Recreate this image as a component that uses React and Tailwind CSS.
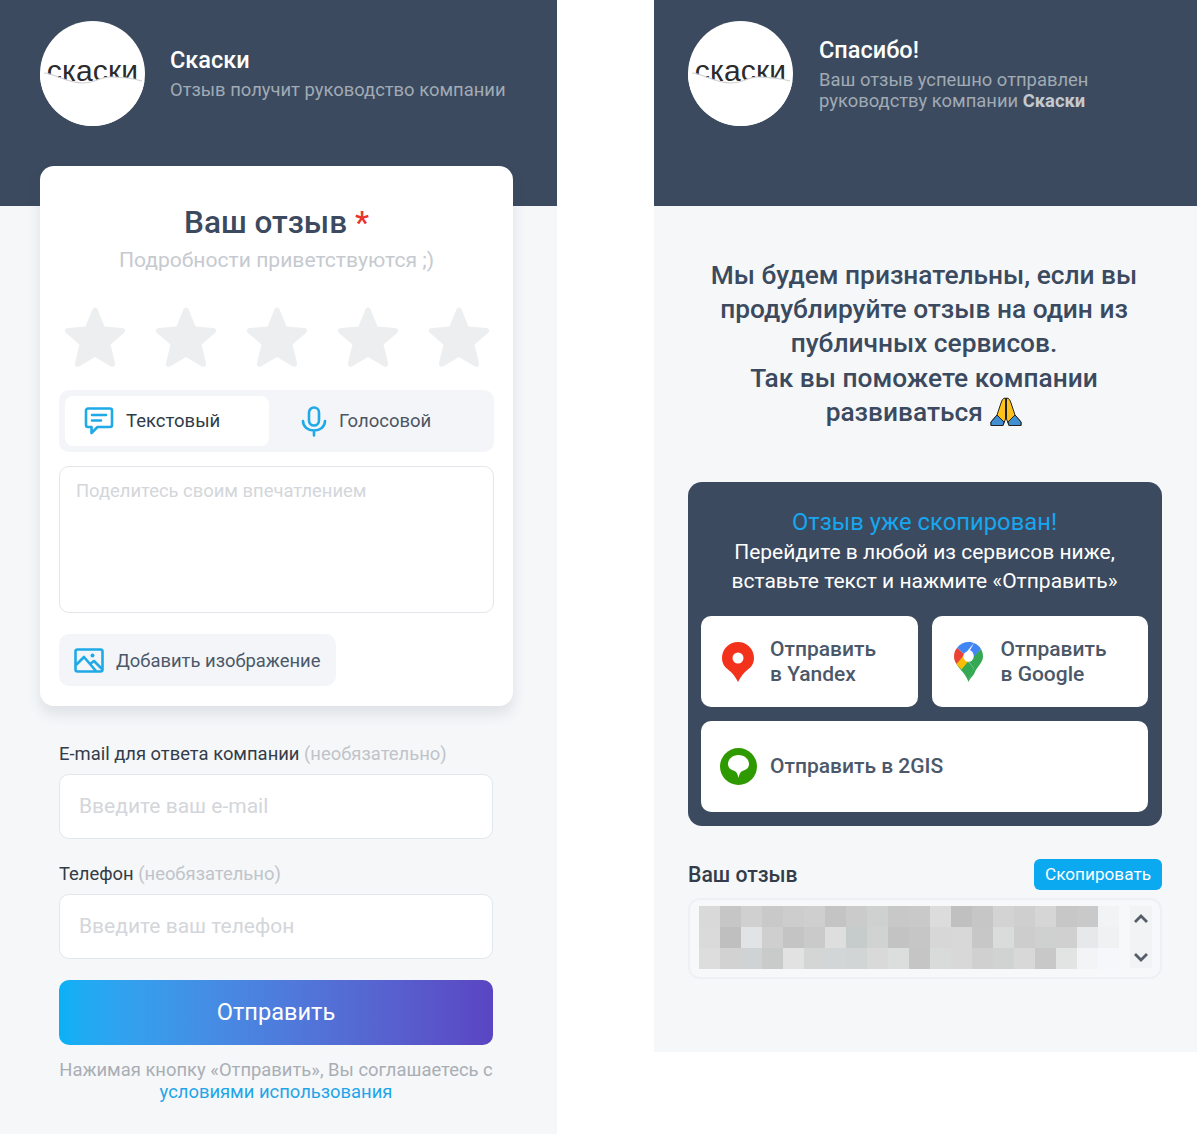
const Logo = () => (
  <div className="relative w-[105px] h-[105px] rounded-full bg-white overflow-hidden shrink-0">
    <div className="absolute left-0 right-0 top-[33px] text-center text-[30px] leading-[34px] text-[#2b2b2b] font-['Liberation_Sans',sans-serif] tracking-[0.2px]">скаски</div>
    <svg className="absolute left-0 top-0" width="105" height="105" viewBox="0 0 105 105">
      <path d="M0 52 C14 52 26 62 43 62 C55 62 60 56 70 56 C82 56 92 57 105 60 L105 105 L0 105 Z" fill="#fff" />
      <path d="M4 52 C14 52 26 62 43 62 C55 62 60 56 70 56 C82 56 92 57 102 60" fill="none" stroke="#cfcfcf" strokeWidth="1.2" />
    </svg>
  </div>
);

const Star = () => (
  <svg width="62" height="62" viewBox="0 0 62 62">
    <path d="M31 1.5 C32.5 1.5 33.5 3 34 4.5 L40.5 20.5 L58 22 C61.5 22.5 62 25 60 27 L46.5 38.5 L51 57 C51.5 60.5 49 61.5 47 60.5 L31 51 L15 60.5 C13 61.5 10.5 60.5 11 57 L15.5 38.5 L2 27 C0 25 .5 22.5 4 22 L21.5 20.5 L28 4.5 C28.5 3 29.5 1.5 31 1.5 Z" fill="#eceef0" />
  </svg>
);

const ChatIcon = () => (
  <svg width="30" height="30" viewBox="0 0 30 30" fill="none" stroke="#1fa9e6" strokeWidth="2.6" strokeLinejoin="round" strokeLinecap="round">
    <path d="M4 2.5 H26 A2 2 0 0 1 28 4.5 V19 A2 2 0 0 1 26 21 H13.5 L7.5 27 V21 H4 A2 2 0 0 1 2 19 V4.5 A2 2 0 0 1 4 2.5 Z" />
    <path d="M8 9 H22 M8 14.5 H17" />
  </svg>
);

const MicIcon = () => (
  <svg width="26" height="31" viewBox="0 0 26 31" fill="none" stroke="#1fa9e6" strokeWidth="2.6" strokeLinecap="round">
    <rect x="8" y="1.5" width="10" height="18" rx="5" />
    <path d="M2 15 C2 21 7 24.5 13 24.5 C19 24.5 24 21 24 15 M13 24.5 V29.5" />
  </svg>
);

const ImageIcon = () => (
  <svg width="30" height="25" viewBox="0 0 30 25" fill="none" stroke="#1fa9e6" strokeWidth="2.6" strokeLinejoin="round">
    <rect x="1.5" y="1.5" width="27" height="22" rx="2" />
    <path d="M2 17 L10 9 L22 23 M16 16 L20 13 L28 21" />
    <circle cx="18.5" cy="7.5" r="2" fill="#1fa9e6" stroke="none" />
  </svg>
);

const YandexPin = () => (
  <svg width="32" height="40" viewBox="0 0 32 40">
    <path d="M16 0 C7 0 0 7 0 16 C0 23 4 26 9 30 C12 33 14 36 16 40 C18 36 20 33 23 30 C28 26 32 23 32 16 C32 7 25 0 16 0 Z" fill="#f2321a" />
    <circle cx="16" cy="16" r="5.5" fill="#fff" />
  </svg>
);

const GooglePin = () => (
  <svg width="29" height="40" viewBox="0 0 29 40">
    <path d="M14.5 40 C12 32 6 28 2.5 22 L9 14 L20 26 C18 30 16 34 14.5 40 Z" fill="#34a853" />
    <path d="M20 26 L14 19 L27 7 C28.5 9.5 29 12 29 14.5 C29 21 23 24 20 32 C18 35 16 36 14.5 40 C16 33 18 29 20 26 Z" fill="#34a853" />
    <path d="M2.5 22 L10 13 L14.5 19 L7.5 27.5 C5.5 25.5 4 24 2.5 22 Z" fill="#fbbc04" />
    <path d="M0 14.5 C0 10.5 1.3 7.8 3.2 5.8 L10.5 12.5 L2.5 22 C0.8 19.5 0 17 0 14.5 Z" fill="#ea4335" />
    <path d="M3.2 5.8 C6 2 10 0 14.5 0 C17 0 18.5 .5 20 1 L10.5 12.5 Z" fill="#4285f4" />
    <path d="M20 1 C23 2.3 25.5 4.3 27 7 L18.5 16 C19 15 19.5 14 19.5 13 C19.5 11 18 9 16 8.3 Z" fill="#4285f4" />
    <circle cx="14.5" cy="14.5" r="5.2" fill="#fff" />
  </svg>
);

const GisIcon = () => (
  <svg width="37" height="37" viewBox="0 0 37 37">
    <circle cx="18.5" cy="18.5" r="18.5" fill="#2f9a00" />
    <path d="M18.5 7 C24.5 7 29 11 29 16 C29 20.5 25.5 22 22.5 23 C20.5 23.8 19.3 26 18.5 30 C17.7 26 16.5 23.8 14.5 23 C11.5 22 8 20.5 8 16 C8 11 12.5 7 18.5 7 Z" fill="#fff" />
  </svg>
);

const Pray = () => (
  <svg className="inline-block align-[-6px] ml-[1px]" width="32" height="30" viewBox="0 0 32 30">
    <path d="M15.5 1 C13 1 12 3 11 6 L7 18 L1 25 L1 28.5 L13 28.5 L15.5 22 Z" fill="#fcc21b" stroke="#222" strokeWidth="1" />
    <path d="M16.5 1 C19 1 20 3 21 6 L25 18 L31 25 L31 28.5 L19 28.5 L16.5 22 Z" fill="#fcc21b" stroke="#222" strokeWidth="1" />
    <path d="M7 18 L1 25 L1 28.5 L13 28.5 L14 25 Z M25 18 L31 25 L31 28.5 L19 28.5 L18 25 Z" fill="#3f8fd2" stroke="#222" strokeWidth="1" />
  </svg>
);

const Field = ({ placeholder }) => (
  <div className="h-[65px] bg-white border border-[#e3e6ea] rounded-[10px] pl-[19px] pt-[1px] flex items-center text-[21px] text-[#d3d6da]">
    {placeholder}
  </div>
);

const SendCard = ({ icon, children, wide }) => (
  <div className={`h-[91px] bg-white rounded-[10px] flex items-center text-[#4b5869] text-[21px] leading-[25px] font-medium pl-[17px] ${wide ? 'col-span-2' : ''}`}>
    <div className="w-[40px] mr-[12px] flex justify-center shrink-0">{icon}</div>
    <div>{children}</div>
  </div>
);

const blur = [
  ['#d9d9d9','#c6c6c6','#d0d0d0','#c9c9c9','#cdcdcd','#cfcfcf','#c4c4c4','#cbcbcb','#cfd1d1','#c8c8c8','#c9c9c9','#dcdcdc','#c0c0c0','#c6c6c6','#d3d3d3','#cfcfcf','#d6d6d6','#c7c7c7','#c9c9c9','#f1f3f5'],
  ['#dadada','#bfbfbf','#e1e3e4','#cfcfcf','#c4c4c4','#cacaca','#dedede','#c6cbcc','#d1d3d3','#c3c3c3','#c6c6c6','#d7d7d7','#d8d8d8','#c7c7c7','#dadcdc','#cdcdcd','#cfd1d1','#d0d0d0','#e6e8e9','#eff1f3'],
  ['#dddddd','#d2d2d2','#cfd3d3','#c9cbcb','#e2e2e2','#d4d6d6','#d3d6d6','#d2d5d5','#d9d9d9','#dcdede','#c5c5c5','#d9dbdb','#d8d8d8','#d0d0d0','#d1d3d3','#d8d8d8','#c8c8c8','#e2e4e4','#f2f4f6','#f5f7fa'],
];

export default function App() {
  return (
    <div className="w-[1200px] h-[1134px] bg-white flex items-start font-['Roboto',sans-serif] text-[#3b4a5e]">
      <div className="w-[557px] h-[1134px] bg-[#f5f7f9] shrink-0">
        <div className="h-[206px] bg-[#3b4a5e] pt-[21px] pl-[40px] flex items-start gap-[25px]">
          <Logo />
          <div className="pt-[24px]">
            <div className="text-[23.5px] leading-[30px] font-medium text-white">Скаски</div>
            <div className="text-[18.4px] leading-[28px] text-[#a1aab5] mt-[1px]">Отзыв получит руководство компании</div>
          </div>
        </div>
        <div className="ml-[40px] mr-[44px] -mt-[40px] h-[540px] relative bg-white rounded-[14px] px-[19px] pt-[37px] shadow-[0_8px_14px_rgba(60,70,90,0.12)]">
          <div className="text-center text-[31.5px] leading-[40px] font-medium text-[#3b4a5e]">Ваш отзыв <span className="text-[#e8352b]">*</span></div>
          <div className="text-center text-[21.1px] leading-[28px] text-[#c6cacf] mt-[3px]">Подробности приветствуются ;)</div>
          <div className="flex justify-between pl-[5px] pr-[4px] mt-[32px]">
            <Star /><Star /><Star /><Star /><Star />
          </div>
          <div className="mt-[22px] h-[62px] bg-[#f3f5f8] rounded-[10px] p-[6px] flex">
            <div className="w-[204px] h-[50px] bg-white rounded-[8px] flex items-center pl-[19px] gap-[12px] text-[18.5px] text-[#2f3a47]">
              <ChatIcon /><span className="pt-[1px]">Текстовый</span>
            </div>
            <div className="flex items-center pl-[32px] gap-[12px] text-[18.5px] text-[#4b5563]">
              <MicIcon /><span className="pt-[1px]">Голосовой</span>
            </div>
          </div>
          <div className="mt-[14px] h-[147px] bg-white border border-[#e3e6ea] rounded-[10px] px-[16px] py-[10px] text-[18.4px] leading-[28px] text-[#d3d6da]">Поделитесь своим впечатлением</div>
          <div className="mt-[21px] w-[277px] h-[52px] bg-[#f3f5f8] rounded-[10px] flex items-center pl-[15px] gap-[12px] text-[18.4px] text-[#4b5869]">
            <ImageIcon /><span className="pt-[1px]">Добавить изображение</span>
          </div>
        </div>
        <div className="ml-[59px] mr-[64px]">
          <div className="mt-[34px] h-[28px] text-[18.4px] leading-[28px] text-[#333c48]">E-mail для ответа компании <span className="text-[#c0c4c9]">(необязательно)</span></div>
          <div className="mt-[6px]"><Field placeholder="Введите ваш e-mail" /></div>
          <div className="mt-[21px] h-[28px] text-[18.4px] leading-[28px] text-[#333c48]">Телефон <span className="text-[#c0c4c9]">(необязательно)</span></div>
          <div className="mt-[6px]"><Field placeholder="Введите ваш телефон" /></div>
          <div className="mt-[21px] h-[65px] rounded-[10px] bg-gradient-to-r from-[#08b1f6] to-[#5a45c2] flex items-center justify-center text-white text-[23.6px]">Отправить</div>
          <div className="mt-[14px] text-center text-[18.4px] leading-[22px] text-[#a9aeb5] whitespace-nowrap">Нажимая кнопку «Отправить», Вы соглашаетесь с</div>
          <div className="text-center text-[18.4px] leading-[22px] text-[#1fa5e8]">условиями использования</div>
        </div>
      </div>

      <div className="ml-[97px] w-[543px] h-[1052px] bg-[#f5f7f9] shrink-0">
        <div className="h-[206px] bg-[#3b4a5e] pt-[21px] pl-[34px] flex items-start gap-[26px]">
          <Logo />
          <div className="pt-[14px]">
            <div className="text-[23.5px] leading-[30px] font-medium text-white">Спасибо!</div>
            <div className="text-[18.4px] leading-[21px] text-[#a1aab5] mt-[4px]">Ваш отзыв успешно отправлен<br />руководству компании <span className="font-bold text-[#c3c9d0]">Скаски</span></div>
          </div>
        </div>
        <div className="pt-[52px] text-center text-[26.3px] leading-[34.2px] font-medium text-[#3b4a5e] pl-[34px] pr-[37px]">
          Мы будем признательны, если вы<br />продублируйте отзыв на один из<br />публичных сервисов.<br />Так вы поможете компании<br />развиваться <Pray />
        </div>
        <div className="ml-[34px] mr-[35px] mt-[53px] h-[344px] bg-[#3b4a5e] rounded-[14px] pl-[13px] pr-[14px] pt-[25px]">
          <div className="text-center text-[23.8px] leading-[31px] text-[#17a6ef]">Отзыв уже скопирован!</div>
          <div className="text-center text-[21px] leading-[29px] text-white">Перейдите в любой из сервисов ниже,<br />вставьте текст и нажмите «Отправить»</div>
          <div className="mt-[20px] grid grid-cols-2 gap-[14px]">
            <SendCard icon={<YandexPin />}>Отправить<br />в Yandex</SendCard>
            <SendCard icon={<GooglePin />}>Отправить<br />в Google</SendCard>
            <SendCard icon={<GisIcon />} wide>Отправить в 2GIS</SendCard>
          </div>
        </div>
        <div className="ml-[34px] mr-[35px] mt-[33px] h-[31px] flex items-center justify-between">
          <div className="text-[21.2px] font-medium text-[#333c48]">Ваш отзыв</div>
          <div className="w-[128px] h-[31px] bg-[#0aa9f0] rounded-[6px] flex items-center justify-center text-white text-[17.2px]">Скопировать</div>
        </div>
        <div className="ml-[34px] mr-[35px] mt-[8px] h-[81px] bg-[#f7f8fa] border-2 border-[#eef0f3] rounded-[12px] pl-[9px] pt-[6px] flex">
          <div className="w-[420px] flex flex-col">
            {blur.map((row, i) => (
              <div key={i} className="flex">
                {row.map((c, j) => (
                  <div key={j} className="w-[21px] h-[21px]" style={{ backgroundColor: c }} />
                ))}
              </div>
            ))}
          </div>
          <div className="ml-auto mr-[8px] w-[22px] h-[62px] flex flex-col items-center justify-between bg-[#f2f3f4]">
            <svg className="mt-[7px]" width="16" height="11" viewBox="0 0 16 11" fill="none" stroke="#555d68" strokeWidth="2.8"><path d="M2 9 L8 3 L14 9" /></svg>
            <svg className="mb-[5px]" width="16" height="11" viewBox="0 0 16 11" fill="none" stroke="#555d68" strokeWidth="2.8"><path d="M2 2 L8 8 L14 2" /></svg>
          </div>
        </div>
      </div>
    </div>
  );
}
